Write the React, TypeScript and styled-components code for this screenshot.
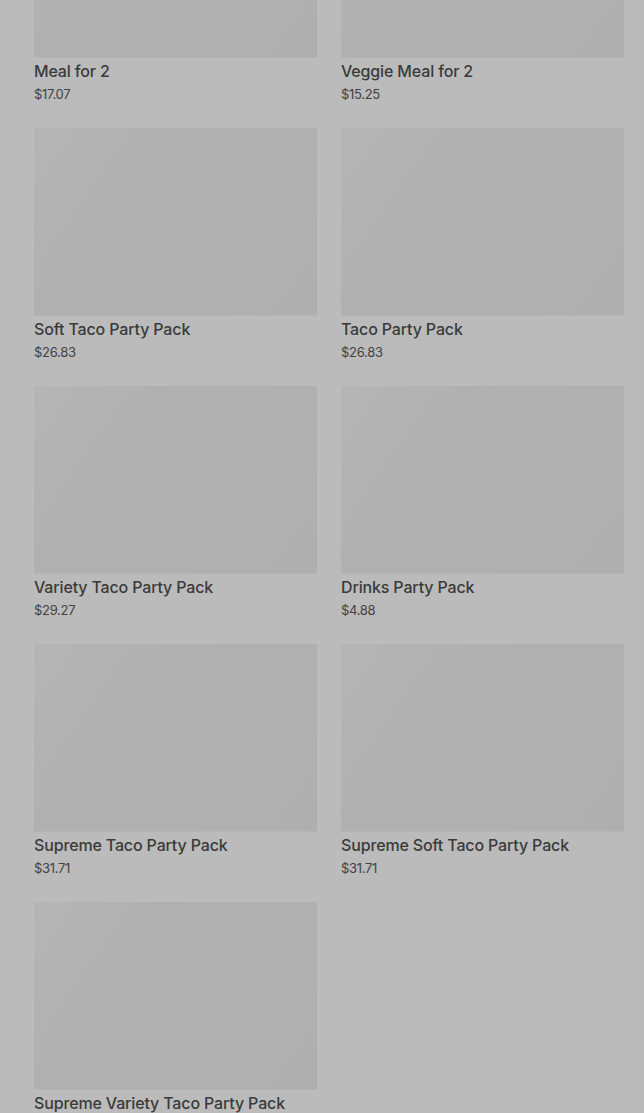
import { createGlobalStyle } from "styled-components";
import styled from "styled-components";

interface Product {
    name: string;
    price: number;
}

const products: Product[] = [
    { name: "Meal for 2", price: 17.07 },
    { name: "Veggie Meal for 2", price: 15.25 },
    { name: "Soft Taco Party Pack", price: 26.83 },
    { name: "Taco Party Pack", price: 26.83 },
    { name: "Variety Taco Party Pack", price: 29.27 },
    { name: "Drinks Party Pack", price: 4.88 },
    { name: "Supreme Taco Party Pack", price: 31.71 },
    { name: "Supreme Soft Taco Party Pack", price: 31.71 },
    { name: "Supreme Variety Taco Party Pack", price: 35.37 },
];

const App = () => {
    return (
        <>
            <GlobalStyle />
            <Page>
                <Grid>
                    {products.map((item, index) => (
                        <Card key={index}>
                            <Thumb />
                            <Name>{item.name}</Name>
                            <Price>${item.price.toFixed(2)}</Price>
                        </Card>
                    ))}
                </Grid>
            </Page>
        </>
    );
};

export default App;

// Styled Components
const GlobalStyle = createGlobalStyle`
    html, body {
        margin: 0;
        padding: 0;
        background: #bbbbbb;
        height: 1113px;
        overflow: hidden;
    }
    body {
        font-family: Inter, "Liberation Sans", Arial, sans-serif;
    }
`;

const Page = styled.div`
    width: 644px;
    height: 1113px;
    overflow: hidden;
    background: #bbbbbb;
`;

const Grid = styled.div`
    display: grid;
    grid-template-columns: 283px 283px;
    column-gap: 24px;
    row-gap: 24px;
    padding: 0 20px 0 34px;
    margin-top: -130px;
`;

const Card = styled.div`
    display: flex;
    flex-direction: column;
`;

const Thumb = styled.div`
    height: 187px;
    background: linear-gradient(125deg, #b5b5b5 0%, #b2b2b2 22%, #b0b0b0 34%, #afafaf 100%);
    box-shadow: 0 1px 0 rgba(0, 0, 0, 0.03);
`;

const Name = styled.div`
    margin-top: 4px;
    font-size: 16px;
    line-height: 20px;
    font-weight: 500;
    letter-spacing: -0.15px;
    color: #3a3a3a;
    white-space: nowrap;
`;

const Price = styled.div`
    margin-top: 3px;
    font-size: 13px;
    line-height: 20px;
    letter-spacing: -0.3px;
    color: #424242;
`;
